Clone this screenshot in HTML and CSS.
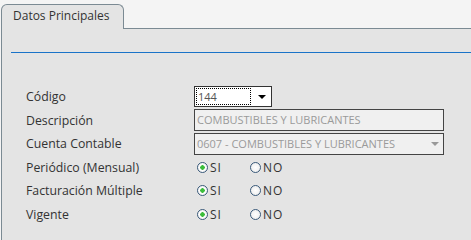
FILE: index.html
```html
<!DOCTYPE html>
<html lang="es">
<head>
    <meta charset="UTF-8">
    <title>Datos Principales</title>
    <link rel="stylesheet" href="styles.css">
</head>
<body>
    <div class="tabs">
        <div class="tab">Datos Principales</div>
        <div class="tab-fill"></div>
    </div>
    <div class="panel">
        <div class="rule"></div>
        <div class="form">
            <label>Código</label>
            <div class="field">
                <div class="combo">
                    <span class="combo-value">144</span>
                    <span class="combo-btn"><span class="arrow"></span></span>
                </div>
            </div>

            <label>Descripción</label>
            <div class="field">
                <div class="input disabled">COMBUSTIBLES Y LUBRICANTES</div>
            </div>

            <label>Cuenta Contable</label>
            <div class="field">
                <div class="input disabled select">
                    <span>0607 - COMBUSTIBLES Y LUBRICANTES</span>
                    <span class="arrow grey"></span>
                </div>
            </div>

            <label>Periódico (Mensual)</label>
            <div class="field radios">
                <span class="radio on">SI</span>
                <span class="radio">NO</span>
            </div>

            <label>Facturación Múltiple</label>
            <div class="field radios">
                <span class="radio on">SI</span>
                <span class="radio">NO</span>
            </div>

            <label>Vigente</label>
            <div class="field radios">
                <span class="radio on">SI</span>
                <span class="radio">NO</span>
            </div>
        </div>
    </div>
</body>
</html>
```

FILE: styles.css
```css
body {
    margin: 0;
    background-color: #f4f4f4;
    font-family: "Open Sans", "DejaVu Sans", sans-serif;
    font-size: 12px;
    color: #333;
    height: 240px;
    overflow: hidden;
}

.tabs {
    display: flex;
    padding-top: 4px;
    padding-left: 1px;
}

.tab {
    width: 110px;
    height: 24px;
    padding-left: 11px;
    line-height: 22px;
    background-color: #e4e4e4;
    border: 1px solid #7b8a93;
    border-bottom: none;
    border-radius: 6px 6px 0 0;
    color: #333;
}

.tab-fill {
    flex: 1;
    border-bottom: 1px solid #7b8a93;
}

.panel {
    box-sizing: border-box;
    margin-left: 1px;
    height: 211px;
    background-color: #e4e4e4;
    border-left: 1px solid #7b8a93;
    padding-top: 23px;
}

.rule {
    margin-left: 9px;
    border-top: 1px solid #1a73c8;
}

.form {
    display: grid;
    grid-template-columns: 168px 252px;
    grid-auto-rows: 23.5px;
    padding-top: 32px;
    padding-left: 24px;
    align-items: center;
}

label {
    color: #333;
    font-size: 12.3px;
}

.field {
    display: flex;
    align-items: center;
}

.combo {
    display: flex;
    width: 76px;
    height: 19px;
    border: 1px solid #333;
    background-color: #fff;
}

.combo-value {
    flex: 1;
    margin: 1px;
    border: 1px dotted #000;
    line-height: 15px;
    font-size: 11px;
    color: #555;
    padding-left: 1px;
}

.combo-btn {
    width: 19px;
    display: flex;
    align-items: center;
    justify-content: center;
}

.arrow {
    width: 0;
    height: 0;
    border-left: 4px solid transparent;
    border-right: 4px solid transparent;
    border-top: 4px solid #000;
}

.arrow.grey {
    border-top-color: #999;
    margin-right: 4px;
}

.input {
    width: 246px;
    height: 20px;
    border: 1px solid #444;
    background-color: #f0f0f0;
    line-height: 20px;
    padding-left: 2px;
    font-size: 11px;
}

.disabled {
    color: #9a9a9a;
}

.select {
    display: flex;
    justify-content: space-between;
    align-items: center;
}

.radios {
    gap: 13px;
    padding-left: 3px;
}

.radio {
    display: flex;
    align-items: center;
    width: 40px;
    font-size: 12px;
    color: #333;
    letter-spacing: 1px;
}

.radio::before {
    content: "";
    width: 11px;
    height: 11px;
    box-sizing: border-box;
    border: 1px solid #3a5a7a;
    border-radius: 50%;
    margin-right: 2px;
    background: radial-gradient(circle, #fff 0, #e9e9e9 100%);
}

.radio.on::before {
    background: radial-gradient(circle, #3cbd3c 0, #3cbd3c 2px, #fff 2.5px, #e9e9e9 100%);
}
```
